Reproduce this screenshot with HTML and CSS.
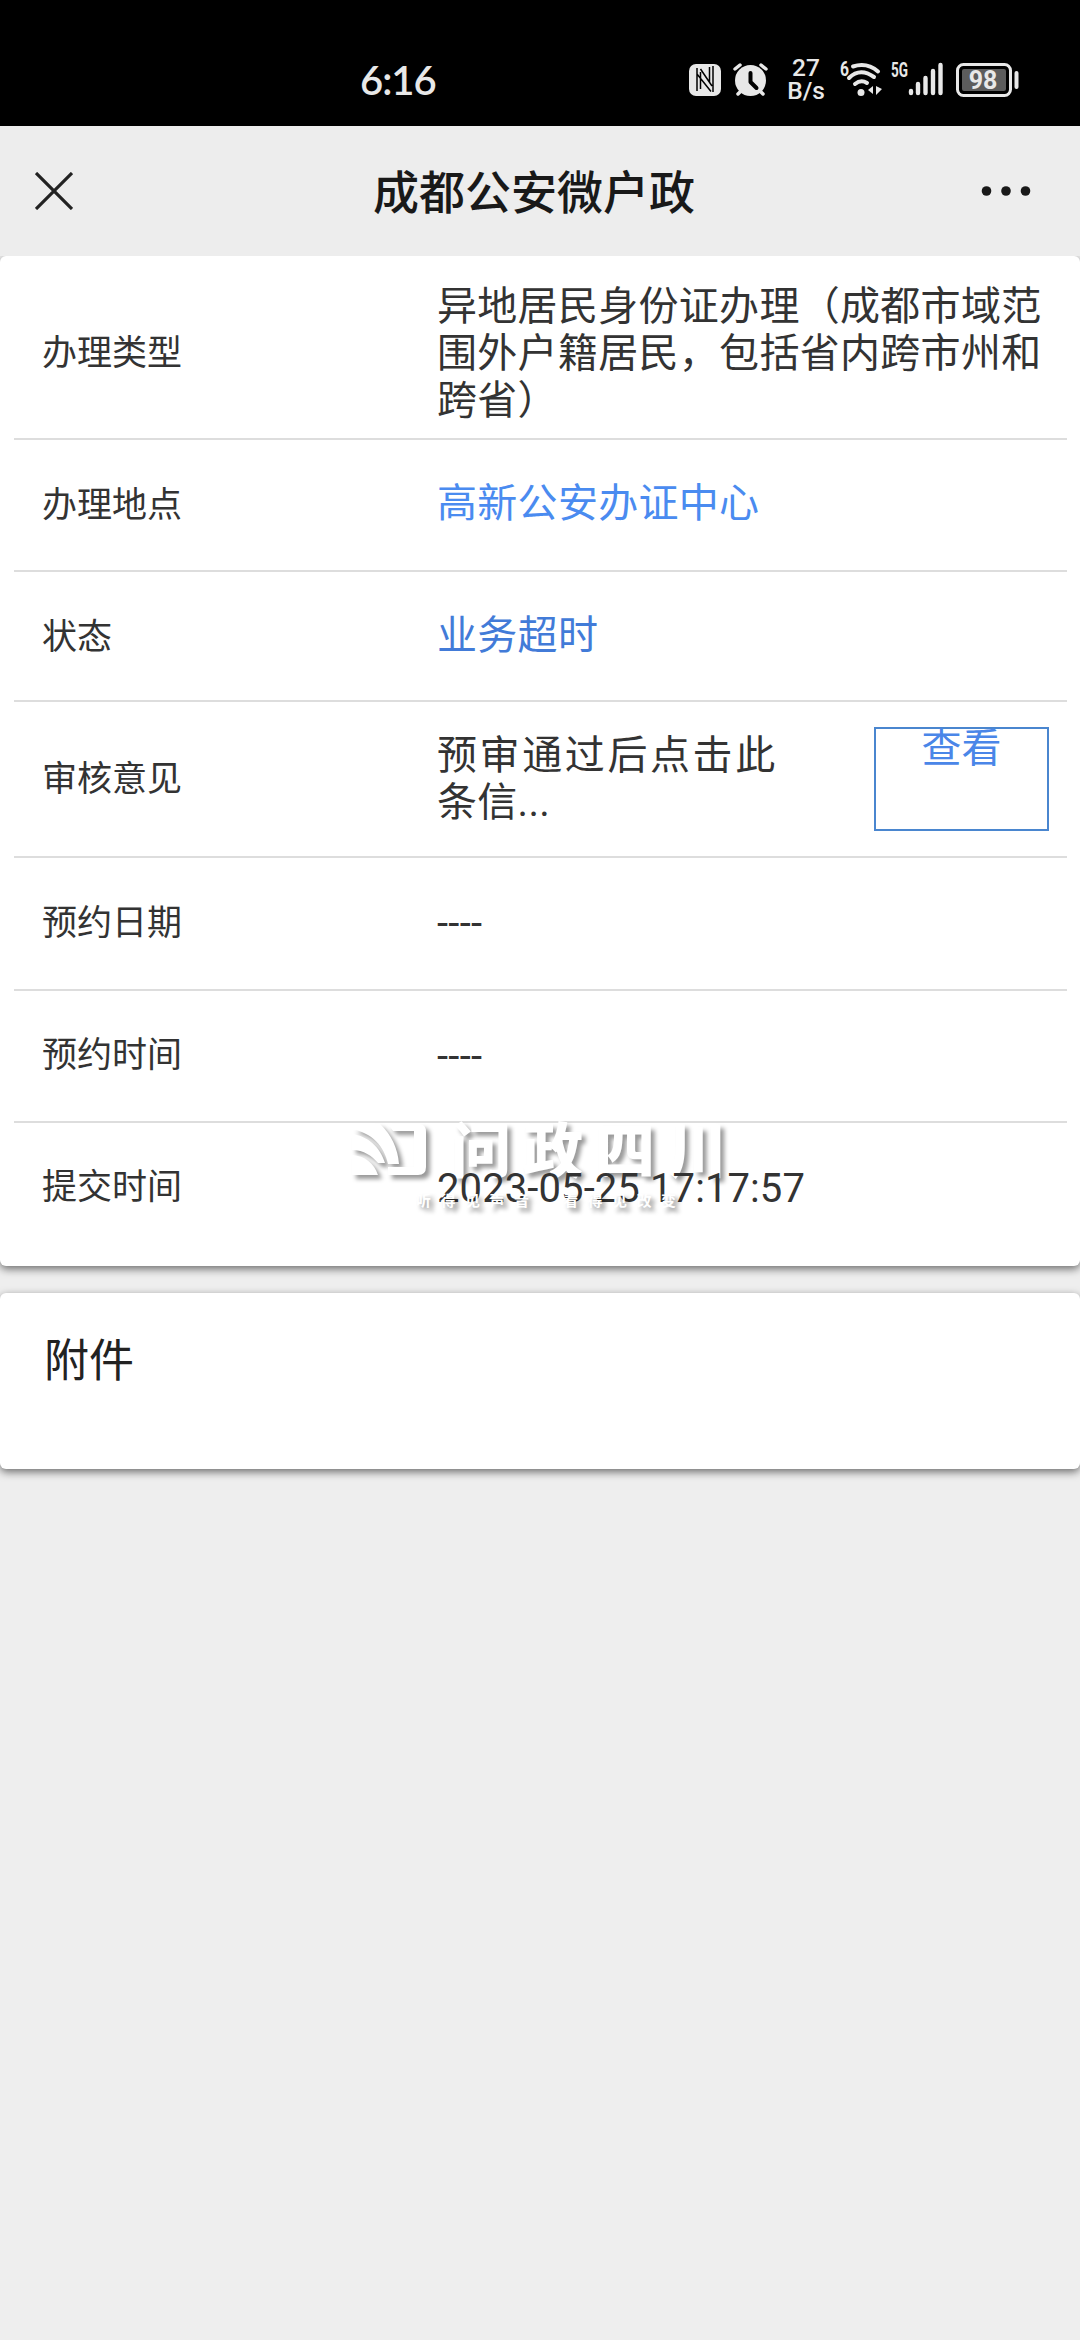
FILE: index.html
```html
<!DOCTYPE html>
<html lang="zh-CN">
<head>
<meta charset="utf-8">
<title>成都公安微户政</title>
<link rel="stylesheet" href="styles.css">
</head>
<body>
<div class="status">
  <span class="clock">6:16</span>
  <svg class="status-icons" viewBox="0 0 350 50">
    <!-- NFC -->
    <rect x="9" y="9" width="32" height="32" rx="7" fill="#e8e8e8"/>
    <path d="M17 36V13M20.500 14L32 31M17 19L31 36.500M33 37V11M20.500 17V34M29.500 12V27" fill="none" stroke="#000" stroke-width="1.500"/>
    <!-- alarm -->
    <circle cx="70.500" cy="25.500" r="15.500" fill="#e8e8e8"/>
    <path d="M55 14l5-4M86 14l-5-4M58 39l5-5M83 39l-5-5" stroke="#e8e8e8" stroke-width="3.500" stroke-linecap="round"/>
    <path d="M70.500 18v9l6 6" fill="none" stroke="#000" stroke-width="4" stroke-linecap="round" stroke-linejoin="round"/>
    <text class="rate" x="126" y="21">27</text>
    <text class="rate" x="126" y="44">B/s</text>
    <!-- Wi-Fi -->
    <text class="gen" x="160" y="21" textLength="9" lengthAdjust="spacingAndGlyphs">6</text>
    <g fill="none" stroke="#e8e8e8" stroke-width="4" stroke-linecap="round">
      <path d="M173 11.500Q187 7 198 16.500"/>
      <path d="M169 23Q180 12 194 22"/>
      <path d="M175 29Q181 24 187 28"/>
    </g>
    <circle cx="181" cy="37.500" r="3.500" fill="#e8e8e8"/>
    <path d="M193 31v8l-5-4zM196 31v9l6-6z" fill="#e8e8e8"/>
    <!-- mobile signal -->
    <text class="gen" x="211" y="22" textLength="17" lengthAdjust="spacingAndGlyphs">5G</text>
    <path d="M231 36v2M238 29v9M245.500 23v15M253 16v22M260.500 10v28" stroke="#e8e8e8" stroke-width="4.400" stroke-linecap="round"/>
    <!-- battery -->
    <rect x="277.500" y="9.500" width="53" height="31" rx="6" fill="none" stroke="#e8e8e8" stroke-width="3"/>
    <rect x="282" y="14" width="44" height="22" rx="2" fill="#5c5c5c"/>
    <path d="M336.500 18v14" stroke="#e8e8e8" stroke-width="4" stroke-linecap="round"/>
    <text class="level" x="303" y="34">98</text>
  </svg>
</div>
<header class="nav">
  <svg class="close" viewBox="0 0 38 38"><path d="M1 1l36 36M37 1l-36 36" stroke="#222" stroke-width="3.200"/></svg>
  <h1 class="title">成都公安微户政</h1>
  <svg class="more" viewBox="0 0 50 10"><circle cx="5.500" cy="5" r="4.800"/><circle cx="25" cy="5" r="4.800"/><circle cx="44.500" cy="5" r="4.800"/></svg>
</header>
<main class="page">
  <section class="card details">
    <div class="row type"><span class="label">办理类型</span><span class="value">异地居民身份证办理（成都市域范围外户籍居民，包括省内跨市州和跨省）</span></div>
    <div class="row place"><span class="label">办理地点</span><span class="value link">高新公安办证中心</span></div>
    <div class="row state"><span class="label">状态</span><span class="value link deep">业务超时</span></div>
    <div class="row opinion"><span class="label">审核意见</span><span class="value brief"><span class="spread">预审通过后点击此</span><br>条信...</span><a class="view">查看</a></div>
    <div class="row date"><span class="label">预约日期</span><span class="value">----</span></div>
    <div class="row time"><span class="label">预约时间</span><span class="value">----</span></div>
    <div class="row submit"><span class="label">提交时间</span><span class="value stamp">2023-05-25 17:17:57</span></div>
    <div class="watermark">
      <svg class="mark" viewBox="0 0 80 56">
        <g fill="#fff">
          <path d="M0 5Q14-1 28 0Q45 16 47 40H36C32 22 20 9 0 5Z"/>
          <path d="M0 26V10C16 12 28 23 33 39H26C20 32 12 26 0 26Z"/>
          <path d="M0 51V31C13 32 22 39 26 51Z"/>
          <path d="M36 0H67Q74 0 74 8V43Q74 51 66 51H36V43H62V7H41Z"/>
        </g>
      </svg>
      <span class="brand">问政四川</span>
      <span class="slogan">听得见声音　看得见改变</span>
    </div>
  </section>
  <section class="card attach">附件</section>
</main>
</body>
</html>
```
FILE: styles.css
```css
* { box-sizing: border-box; }
body {
  margin: 0;
  width: 1080px;
  min-height: 2340px;
  background: #eee;
  font-family: Roboto, "Noto Sans CJK SC", sans-serif;
  color: #333;
}
.status {
  height: 126px;
  background: #000;
  display: flex;
  align-items: flex-start;
  justify-content: space-between;
  padding: 55px 50px 0 360px;
}
.clock {
  font: 600 40px/50px Lato, sans-serif;
  color: #e8e8e8;
  letter-spacing: -1px;
}
.status-icons { width: 350px; height: 50px; }
.status-icons text { fill: #e8e8e8; font-family: Roboto, sans-serif; }
.rate { font-size: 24.500px; font-weight: 500; text-anchor: middle; }
.gen { font-size: 20px; font-weight: 700; }
.level { font-size: 25px; font-weight: 700; text-anchor: middle; }

.nav {
  height: 130px;
  display: flex;
  align-items: center;
  justify-content: space-between;
  padding: 0 49px 0 35px;
  background: #ededed;
}
.close { width: 38px; height: 38px; }
.more { width: 50px; height: 10px; fill: #191919; }
.title {
  margin: 0;
  padding: 0 0 5px 14px;
  font: 500 46px/60px "Noto Sans CJK SC", sans-serif;
  color: #191919;
}

.page { display: flex; flex-direction: column; gap: 27px; }
.card {
  position: relative;
  background: #fff;
  border-radius: 6px;
  box-shadow: 0 3px 8px rgba(0, 0, 0, .55);
}
.details { padding: 0 13px 0 14px; height: 1010px; clip-path: inset(0 0 -20px 0); }
.row {
  display: flex;
  align-items: center;
  padding-left: 28px;
  border-bottom: 2px solid #ddd;
}
.label { width: 395px; flex: none; font-size: 35px; line-height: 46px; }
.value { width: 610px; font-size: 40px; line-height: 47px; letter-spacing: .3px; }
.type { height: 184px; padding-top: 13px; }
.place { height: 132px; }
.place .label { padding-top: 2px; }
.link { padding-bottom: 3px; }
.state { height: 130px; }
.state .label { padding-top: 3px; }
.opinion { height: 156px; }
.opinion .label { padding-top: 2px; }
.date { height: 133px; }
.time { height: 132px; }
.submit { height: 130px; border-bottom: 0; }
.link { color: #4a8bf0; }
.deep { color: #427bd8; padding-bottom: 1px; }
.brief { width: 437px; padding-bottom: 1px; }
.spread { letter-spacing: 2.6px; }
.stamp { letter-spacing: .1px; position: relative; z-index: 2; }
.view {
  width: 175px;
  height: 104px;
  border: 2px solid #4a86cf;
  color: #4a86e8;
  font-size: 40px;
  line-height: 40px;
  text-align: center;
}
.attach {
  height: 176px;
  padding: 39px 44px;
  font-size: 45px;
  line-height: 60px;
  color: #222;
}

/* the date sits between the brand name and the slogan */
.watermark {
  position: absolute;
  left: 352px;
  top: 868px;
  width: 390px;
  height: 95px;
  display: grid;
  grid-template-columns: 99px 1fr;
  grid-template-rows: 61px 35px;
  font-family: "Noto Sans CJK SC", sans-serif;
  color: #fff;
  text-shadow: 4px 4px 4px rgba(0, 0, 0, .4);
}
.mark { width: 80px; height: 56px; overflow: visible; filter: drop-shadow(4px 4px 2px rgba(0, 0, 0, .4)); }
.brand { z-index: 1; font-size: 60px; font-weight: 900; line-height: 46px; letter-spacing: 12px; white-space: nowrap; }
.slogan { z-index: 3; grid-column: 1 / 3; padding-left: 64px; font-size: 15px; font-weight: 700; line-height: 30px; letter-spacing: 9.500px; white-space: nowrap; }
```
